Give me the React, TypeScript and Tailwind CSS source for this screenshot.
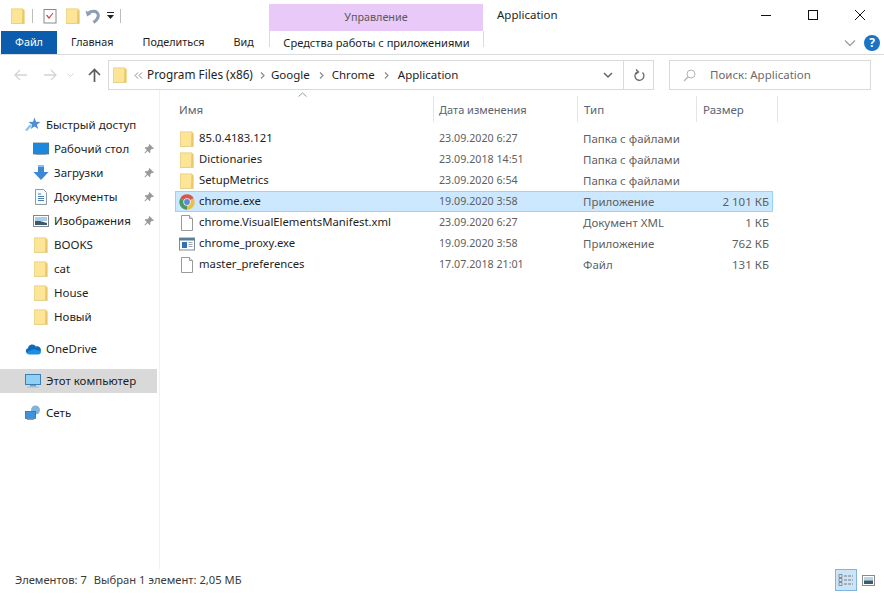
import React from "react";

const Folder = ({ className = "" }: { className?: string }) => (
  <svg width="16" height="16" viewBox="0 0 16 16" className={className}>
    <path d="M1 0.500h12l1.500 1.500v13.500H1z" fill="#fce596" />
    <path d="M1 .5h12v1H2v14H1z" fill="#efd68c" />
    <path d="M12.500 1l2 1.500v13h-2.500z" fill="#e8c869" />
    <path d="M1 15h13.500v1H1z" fill="#e6d08e" />
  </svg>
);

const Doc = () => (
  <svg width="16" height="16" viewBox="0 0 16 16">
    <path d="M2.500.5h8l3 3v12h-11z" fill="#fff" stroke="#9a9a9a" />
    <path d="M10.500.5v3h3" fill="#f0f0f0" stroke="#9a9a9a" />
  </svg>
);

const Exe = () => (
  <svg width="16" height="16" viewBox="0 0 16 16">
    <rect x="0.500" y="2" width="15" height="12" fill="#fff" stroke="#7f8b98" />
    <rect x="0.500" y="2" width="15" height="2.500" fill="#5d7a98" />
    <rect x="3" y="6" width="5" height="6" fill="#2f72b5" />
    <path d="M9.500 6.500h4M9.500 8.500h4M9.500 10.500h4" stroke="#9aa7b5" />
  </svg>
);

const Chrome = () => (
  <svg width="16" height="16" viewBox="0 0 16 16">
    <path d="M8 8L1.300 4.200A7.700 7.700 0 0 1 14.700 4.200z" fill="#d9574a" />
    <path d="M8 8l6.700-3.800A7.700 7.700 0 0 1 8 15.700z" fill="#e9c04a" />
    <path d="M8 8v7.700A7.700 7.700 0 0 1 1.300 4.200z" fill="#4a9a62" />
    <circle cx="8" cy="8" r="3.700" fill="#f4f4f4" />
    <circle cx="8" cy="8" r="2.900" fill="#5a8bd8" />
  </svg>
);

const Pin = () => (
  <svg width="12" height="12" viewBox="0 0 12 12">
    <path d="M6.500 1l4.500 4.500-1 .6-1-.3-1.800 1.800.2 1.700-.9.800-2-2L2 10.500l-.6-.5L3.800 7 1.800 5l.8-.9 1.700.2 1.800-1.800-.3-1z" fill="#9a9a9a" />
  </svg>
);

const Crumb = ({ className }: { className: string }) => (
  <svg width="5" height="7" viewBox="0 0 5 7" className={className}>
    <path d="M1 .5l3 3-3 3" fill="none" stroke="#8a8a8a" strokeWidth="1.200" />
  </svg>
);

const sideIcons: Record<string, React.ReactNode> = {
  star: (
    <svg width="16" height="16" viewBox="0 0 16 16">
      <path d="M9.500.5l1.500 4.200 4.500.2-3.600 2.800 1.300 4.300-3.700-2.500-3.700 2.500 1.300-4.300L3.500 4.900l4.500-.2z" fill="#4f8fd0" />
      <path d="M1 13.500 6 8" stroke="#8fc6f0" strokeWidth="2.500" />
    </svg>
  ),
  desktop: (
    <svg width="16" height="16" viewBox="0 0 16 16">
      <rect x="0" y="2" width="16" height="11" fill="#1b87dd" stroke="#5c7488" strokeWidth="0.800" />
      <rect x="3" y="13" width="10" height="1" fill="#8aa0b0" />
    </svg>
  ),
  down: (
    <svg width="16" height="16" viewBox="0 0 16 16">
      <path d="M5 0h6v7h4.500L8 15 .5 7H5z" fill="#3c87d6" />
      <path d="M5 0h6v2H5z" fill="#8dbde8" />
    </svg>
  ),
  docs: (
    <svg width="16" height="16" viewBox="0 0 16 16">
      <path d="M2.500.5h8l3 3v12h-11z" fill="#f7fafc" stroke="#8c9aa8" />
      <path d="M5 5h3M5 7.500h6M5 9.500h6M5 11.500h6" stroke="#4a7fb0" />
    </svg>
  ),
  image: (
    <svg width="16" height="16" viewBox="0 0 16 16">
      <rect x="0.500" y="2.500" width="15" height="11" fill="#fff" stroke="#7c8790" />
      <rect x="2" y="4" width="12" height="4" fill="#a9cdea" />
      <path d="M2 8l5 0 7 2v2H2z" fill="#3e5a66" />
    </svg>
  ),
  cloud: (
    <svg width="16" height="16" viewBox="0 0 16 16">
      <path d="M3.500 13A3 3 0 0 1 2.800 7.200 4.500 4.500 0 0 1 11 5.500 3.800 3.800 0 0 1 15.800 10a3 3 0 0 1-2.800 3z" fill="#0f6cbd" />
      <path d="M3.500 13.500h9.500a3 3 0 0 0 2.800-3L9 8 2 11z" fill="#1d8fe0" />
    </svg>
  ),
  pc: (
    <svg width="16" height="16" viewBox="0 0 16 16">
      <rect x="0.500" y="1.500" width="15" height="10" fill="#8fd0f5" stroke="#3b7fb8" />
      <rect x="5" y="12" width="6" height="1.500" fill="#7a98b0" />
      <rect x="2" y="13.500" width="12" height="1" fill="#a8bccb" />
    </svg>
  ),
  net: (
    <svg width="16" height="16" viewBox="0 0 16 16">
      <circle cx="10.500" cy="5" r="4.500" fill="#7fb3e0" />
      <rect x="0.500" y="6.500" width="10" height="7" fill="#3f93dd" stroke="#2a6fae" strokeWidth="0.800" />
      <rect x="2" y="13.500" width="7" height="1.500" fill="#8aa0b0" />
    </svg>
  ),
};

const SideRow = ({ label, icon, pin, indent, active }: { label: string; icon: React.ReactNode; pin?: boolean; indent?: boolean; active?: boolean }) => (
  <div className={`flex h-6 items-center ${indent ? "pl-[33px]" : "pl-[25px]"} ${active ? "bg-[#d9d9d9]" : ""}`}>
    <span className="flex w-[21px] shrink-0 items-center">{icon}</span>
    <span className="flex-1 truncate">{label}</span>
    {pin && <span className="flex w-4 justify-center"><Pin /></span>}
  </div>
);

const files = [
  ["folder", "85.0.4183.121", "23.09.2020 6:27", "Папка с файлами", ""],
  ["folder", "Dictionaries", "23.09.2018 14:51", "Папка с файлами", ""],
  ["folder", "SetupMetrics", "23.09.2020 6:54", "Папка с файлами", ""],
  ["chrome", "chrome.exe", "19.09.2020 3:58", "Приложение", "2 101 КБ"],
  ["doc", "chrome.VisualElementsManifest.xml", "23.09.2020 6:27", "Документ XML", "1 КБ"],
  ["exe", "chrome_proxy.exe", "19.09.2020 3:58", "Приложение", "762 КБ"],
  ["doc", "master_preferences", "17.07.2018 21:01", "Файл", "131 КБ"],
];

const fileIcon = (k: string) =>
  k === "folder" ? <Folder /> : k === "chrome" ? <Chrome /> : k === "exe" ? <Exe /> : <Doc />;

export default function App() {
  return (
    <div className="flex h-[593px] w-[884px] flex-col overflow-hidden bg-white text-[11.5px] text-[#1e1e1e]" style={{ fontFamily: '"Noto Sans", sans-serif' }}>
      {/* Title bar */}
      <div className="flex h-[31px] shrink-0 items-end">
        <div className="flex h-[31px] w-[269px] items-center pl-[10px]">
          <Folder />
          <span className="ml-[6px] h-[14px] w-px bg-[#bdbdbd]" />
          <span className="ml-[10px]">
            <svg width="14" height="16" viewBox="0 0 14 16">
              <rect x="1" y="1.500" width="12" height="13.500" fill="#fff" stroke="#8a8a8a" />
              <path d="M3.500 7l2.500 3 4-5" fill="none" stroke="#c0504d" strokeWidth="1.200" />
            </svg>
          </span>
          <span className="ml-[8px]"><Folder /></span>
          <span className="ml-[4px]">
            <svg width="16" height="16" viewBox="0 0 16 16">
              <path d="M0.500 2.500l1.500 6 4.500-2.500z" fill="#8d9db4" />
              <path d="M3.500 5C6.500 2.500 11.500 2.500 13 6c1 3-1 6-4.500 8.500" fill="none" stroke="#8d9db4" strokeWidth="3" />
            </svg>
          </span>
          <span className="ml-[5px]">
            <svg width="9" height="8" viewBox="0 0 9 8">
              <path d="M1 0h7v1H1zM1 3h7L4.500 7z" fill="#222" />
            </svg>
          </span>
          <span className="ml-[5px] h-[14px] w-px bg-[#bdbdbd]" />
        </div>
        <div className="flex h-[27px] w-[214px] items-center justify-center bg-[#e8c9f7] text-[10.8px] text-[#5a5a5a]">Управление</div>
        <div className="flex h-[31px] flex-1 items-center pb-[1px] pl-[14px]">Application</div>
        <div className="flex h-[31px] items-center pb-[2px]">
          <svg width="12" height="12" viewBox="0 0 12 12" className="mr-[35px]"><path d="M1 6.500h10" stroke="#111" /></svg>
          <svg width="12" height="12" viewBox="0 0 12 12" className="mr-[35px]"><rect x="1.500" y="1.500" width="9" height="9" fill="none" stroke="#111" /></svg>
          <svg width="12" height="12" viewBox="0 0 12 12" className="mr-[18px]"><path d="M1 1l10 10M11 1L1 11" stroke="#111" /></svg>
        </div>
      </div>

      {/* Ribbon tabs */}
      <div className="flex h-[24px] shrink-0 items-stretch border-b border-[#dadbdc]">
        <div className="ml-px flex h-[23px] w-[56px] items-center justify-center bg-[#0b5cad] text-[10.8px] text-white">Файл</div>
        <div className="flex w-[212px] items-center text-[10.8px]">
          <span className="ml-[14px]">Главная</span>
          <span className="ml-[29px]">Поделиться</span>
          <span className="ml-[29px]">Вид</span>
        </div>
        <div className="flex h-[16px] w-[215px] items-center justify-center self-start border-x border-[#dadbdc] pt-[8px] text-[11.1px]">
          <span className="leading-none">Средства работы с приложениями</span>
        </div>
        <div className="flex flex-1 items-center justify-end pr-[4px]">
          <svg width="12" height="8" viewBox="0 0 12 8" className="mr-[8px]"><path d="M1 1.500l5 5 5-5" fill="none" stroke="#9aa0a6" strokeWidth="1.300" /></svg>
          <span className="flex h-[16px] w-[16px] items-center justify-center rounded-full bg-[#1a73c4] text-[12px] font-bold leading-none text-white">?</span>
        </div>
      </div>

      {/* Address row */}
      <div className="mt-[5px] flex h-[30px] shrink-0 items-center">
        <div className="flex w-[108px] items-center pl-[14px]">
          <svg width="13" height="12" viewBox="0 0 13 12"><path d="M6 1L1 6l5 5M1 6h12" fill="none" stroke="#d4d4d4" strokeWidth="1.300" /></svg>
          <svg width="13" height="12" viewBox="0 0 13 12" className="ml-[17px]"><path d="M7 1l5 5-5 5M12 6H0" fill="none" stroke="#d4d4d4" strokeWidth="1.300" /></svg>
          <svg width="7" height="5" viewBox="0 0 7 5" className="ml-[10px]"><path d="M.5.500l3 3 3-3" fill="none" stroke="#d4d4d4" /></svg>
          <svg width="13" height="14" viewBox="0 0 13 14" className="ml-[14px]"><path d="M6.500 14V2M1 7l5.500-5.500L12 7" fill="none" stroke="#5c5c5c" strokeWidth="1.700" /></svg>
        </div>
        <div className="flex h-[30px] w-[546px] items-center border border-[#d9d9d9]">
          <span className="ml-[3px]"><Folder /></span>
          <svg width="9" height="7" viewBox="0 0 9 7" className="ml-[6px]"><path d="M4 .5l-3 3 3 3M8 .5l-3 3 3 3" fill="none" stroke="#8a8a8a" /></svg>
          <span className="ml-[4px] flex flex-1 items-center text-[11.8px]">
            Program Files (x86)
            <Crumb className="ml-[7px] mr-[6px]" />
            <span className="text-[11.5px]">Google</span>
            <Crumb className="ml-[9px] mr-[8px]" />
            <span className="text-[11.5px]">Chrome</span>
            <Crumb className="ml-[9px] mr-[9px]" />
            <span className="text-[11.5px]">Application</span>
          </span>
          <svg width="10" height="7" viewBox="0 0 10 7" className="mr-[10px]"><path d="M1 1l4 4 4-4" fill="none" stroke="#666" strokeWidth="1.500" /></svg>
          <span className="flex h-full w-[30px] items-center justify-center border-l border-[#d9d9d9]">
            <svg width="12" height="13" viewBox="0 0 12 13"><path d="M9.500 3.500A4.500 4.500 0 1 1 4 3M3 .5l2.500 2.500L3 5" fill="none" stroke="#666" strokeWidth="1.300" /></svg>
          </span>
        </div>
        <div className="ml-[15px] flex h-[30px] w-[202px] items-center border border-[#d9d9d9] pl-[13px] text-[#6b6b6b]">
          <svg width="13" height="13" viewBox="0 0 13 13"><circle cx="8" cy="5" r="4" fill="none" stroke="#b5b5b5" /><path d="M5 8l-4 4" stroke="#b5b5b5" strokeWidth="1.300" /></svg>
          <span className="ml-[14px]">Поиск: Application</span>
        </div>
      </div>

      {/* Main */}
      <div className="flex min-h-0 flex-1">
        <aside className="w-[160px] shrink-0 border-r border-[#f1f1f1] pt-[23px]">
          <div className="w-[157px]">
            <SideRow label="Быстрый доступ" icon={sideIcons.star} />
            <SideRow indent pin label="Рабочий стол" icon={sideIcons.desktop} />
            <SideRow indent pin label="Загрузки" icon={sideIcons.down} />
            <SideRow indent pin label="Документы" icon={sideIcons.docs} />
            <SideRow indent pin label="Изображения" icon={sideIcons.image} />
            <SideRow indent label="BOOKS" icon={<Folder />} />
            <SideRow indent label="cat" icon={<Folder />} />
            <SideRow indent label="House" icon={<Folder />} />
            <SideRow indent label="Новый" icon={<Folder />} />
            <div className="mt-2"><SideRow label="OneDrive" icon={sideIcons.cloud} /></div>
            <div className="mt-2"><SideRow active label="Этот компьютер" icon={sideIcons.pc} /></div>
            <div className="mt-2"><SideRow label="Сеть" icon={sideIcons.net} /></div>
          </div>
        </aside>
        <main className="relative min-w-0 flex-1 pl-[15px] pt-[6px]">
          <span className="absolute left-[138px] top-[2px]">
            <svg width="9" height="5" viewBox="0 0 9 5"><path d="M.5 4.500l4-3.500 4 3.500" fill="none" stroke="#9a9a9a" /></svg>
          </span>
          <div className="grid h-[26px] w-[603px] grid-cols-[259px_144px_119px_81px] text-[#5a6472]">
            <div className="flex items-center border-r border-[#e5e5e5] pl-[4px] pt-[2px]">Имя</div>
            <div className="flex items-center border-r border-[#e5e5e5] pl-[5px] pt-[2px] text-[11px]">Дата изменения</div>
            <div className="flex items-center border-r border-[#e5e5e5] pl-[6px] pt-[2px]">Тип</div>
            <div className="flex items-center border-r border-[#e5e5e5] pl-[6px] pt-[2px]">Размер</div>
          </div>
          <div className="mt-[6px] w-[598px]">
            {files.map(([k, n, d, t, s]) => {
              const sel = n === "chrome.exe";
              return (
                <div key={n} className={`grid h-[21px] grid-cols-[23px_240px_144px_1fr] items-center border ${sel ? "border-[#99d1ff] bg-[#cce8ff]" : "border-transparent"}`}>
                  <span className="flex pl-[3px]">{fileIcon(k)}</span>
                  <span className="truncate text-[11.3px]">{n}</span>
                  <span className="text-[10.7px] text-[#5f5f5f]">{d}</span>
                  <span className="flex justify-between text-[#5f5f5f]">
                    <span>{t}</span>
                    <span className="pr-[3px]">{s}</span>
                  </span>
                </div>
              );
            })}
          </div>
        </main>
      </div>

      {/* Status bar */}
      <div className="flex h-[24px] shrink-0 items-center pb-[2px] pl-[15px] text-[11.2px] text-[#3a3a3a]">
        <span>Элементов: 7</span>
        <span className="ml-[7px]">Выбран 1 элемент: 2,05 МБ</span>
        <span className="ml-auto mr-[5px] flex h-[22px] w-[22px] items-center justify-center border border-[#7fb4dc] bg-[#cce4f7]">
          <svg width="16" height="14" viewBox="0 0 16 14"><path d="M1 1.500h3v3H1zM1 5.500h3v3H1zM1 9.500h3v3H1z" fill="none" stroke="#7a7a7a" strokeWidth="0.800" /><path d="M6 3h9M6 7h9M6 11h9" stroke="#7a7a7a" strokeDasharray="3 1" /></svg>
        </span>
        <span className="mr-[9px] flex">
          <svg width="13" height="11" viewBox="0 0 13 11"><rect x="0.500" y="0.500" width="12" height="10" fill="#fff" stroke="#8a8a8a" /><rect x="2" y="2" width="9" height="3.500" fill="#b6d4ea" /><path d="M2 5.500h9v3.500H2z" fill="#40596a" /></svg>
        </span>
      </div>
    </div>
  );
}
